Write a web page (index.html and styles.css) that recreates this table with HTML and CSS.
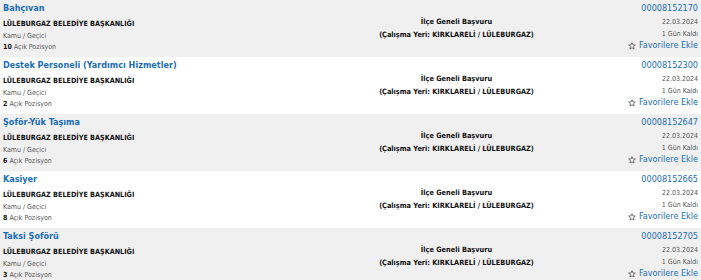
FILE: index.html
```html
<!DOCTYPE html>
<html lang="tr">
<head>
<meta charset="utf-8">
<link rel="stylesheet" href="styles.css">
</head>
<body>
<div class="list">
  <div class="row">
    <div class="left">
      <a class="title" href="#">Bahçıvan</a>
      <div class="org">LÜLEBURGAZ BELEDİYE BAŞKANLIĞI</div>
      <div class="type">Kamu / Geçici</div>
      <div class="count"><b>10</b> Açık Pozisyon</div>
    </div>
    <div class="mid">
      <div>İlçe Geneli Başvuru</div>
      <div>(Çalışma Yeri: KIRKLARELİ / LÜLEBURGAZ)</div>
    </div>
    <div class="right">
      <a class="num" href="#">00008152170</a>
      <div class="date">22.03.2024</div>
      <div class="left-days">1 Gün Kaldı</div>
      <a class="fav" href="#"><svg class="star" viewBox="0 0 10 10"><path d="M5 0.8 L6.2 3.6 L9.2 3.8 L6.9 5.8 L7.6 8.8 L5 7.2 L2.4 8.8 L3.1 5.8 L0.8 3.8 L3.8 3.6 Z"/></svg>Favorilere Ekle</a>
    </div>
  </div>
  <div class="row">
    <div class="left">
      <a class="title" href="#">Destek Personeli (Yardımcı Hizmetler)</a>
      <div class="org">LÜLEBURGAZ BELEDİYE BAŞKANLIĞI</div>
      <div class="type">Kamu / Geçici</div>
      <div class="count"><b>2</b> Açık Pozisyon</div>
    </div>
    <div class="mid">
      <div>İlçe Geneli Başvuru</div>
      <div>(Çalışma Yeri: KIRKLARELİ / LÜLEBURGAZ)</div>
    </div>
    <div class="right">
      <a class="num" href="#">00008152300</a>
      <div class="date">22.03.2024</div>
      <div class="left-days">1 Gün Kaldı</div>
      <a class="fav" href="#"><svg class="star" viewBox="0 0 10 10"><path d="M5 0.8 L6.2 3.6 L9.2 3.8 L6.9 5.8 L7.6 8.8 L5 7.2 L2.4 8.8 L3.1 5.8 L0.8 3.8 L3.8 3.6 Z"/></svg>Favorilere Ekle</a>
    </div>
  </div>
  <div class="row">
    <div class="left">
      <a class="title" href="#">Şoför-Yük Taşıma</a>
      <div class="org">LÜLEBURGAZ BELEDİYE BAŞKANLIĞI</div>
      <div class="type">Kamu / Geçici</div>
      <div class="count"><b>6</b> Açık Pozisyon</div>
    </div>
    <div class="mid">
      <div>İlçe Geneli Başvuru</div>
      <div>(Çalışma Yeri: KIRKLARELİ / LÜLEBURGAZ)</div>
    </div>
    <div class="right">
      <a class="num" href="#">00008152647</a>
      <div class="date">22.03.2024</div>
      <div class="left-days">1 Gün Kaldı</div>
      <a class="fav" href="#"><svg class="star" viewBox="0 0 10 10"><path d="M5 0.8 L6.2 3.6 L9.2 3.8 L6.9 5.8 L7.6 8.8 L5 7.2 L2.4 8.8 L3.1 5.8 L0.8 3.8 L3.8 3.6 Z"/></svg>Favorilere Ekle</a>
    </div>
  </div>
  <div class="row">
    <div class="left">
      <a class="title" href="#">Kasiyer</a>
      <div class="org">LÜLEBURGAZ BELEDİYE BAŞKANLIĞI</div>
      <div class="type">Kamu / Geçici</div>
      <div class="count"><b>8</b> Açık Pozisyon</div>
    </div>
    <div class="mid">
      <div>İlçe Geneli Başvuru</div>
      <div>(Çalışma Yeri: KIRKLARELİ / LÜLEBURGAZ)</div>
    </div>
    <div class="right">
      <a class="num" href="#">00008152665</a>
      <div class="date">22.03.2024</div>
      <div class="left-days">1 Gün Kaldı</div>
      <a class="fav" href="#"><svg class="star" viewBox="0 0 10 10"><path d="M5 0.8 L6.2 3.6 L9.2 3.8 L6.9 5.8 L7.6 8.8 L5 7.2 L2.4 8.8 L3.1 5.8 L0.8 3.8 L3.8 3.6 Z"/></svg>Favorilere Ekle</a>
    </div>
  </div>
  <div class="row">
    <div class="left">
      <a class="title" href="#">Taksi Şoförü</a>
      <div class="org">LÜLEBURGAZ BELEDİYE BAŞKANLIĞI</div>
      <div class="type">Kamu / Geçici</div>
      <div class="count"><b>3</b> Açık Pozisyon</div>
    </div>
    <div class="mid">
      <div>İlçe Geneli Başvuru</div>
      <div>(Çalışma Yeri: KIRKLARELİ / LÜLEBURGAZ)</div>
    </div>
    <div class="right">
      <a class="num" href="#">00008152705</a>
      <div class="date">22.03.2024</div>
      <div class="left-days">1 Gün Kaldı</div>
      <a class="fav" href="#"><svg class="star" viewBox="0 0 10 10"><path d="M5 0.8 L6.2 3.6 L9.2 3.8 L6.9 5.8 L7.6 8.8 L5 7.2 L2.4 8.8 L3.1 5.8 L0.8 3.8 L3.8 3.6 Z"/></svg>Favorilere Ekle</a>
    </div>
  </div>
</div>
</body>
</html>
```
FILE: styles.css
```css
html, body {
  margin: 0;
  padding: 0;
  background: #ffffff;
}
body {
  font-family: "DejaVu Sans Condensed", "DejaVu Sans", sans-serif;
  font-stretch: condensed;
  color: #222;
}
a {
  text-decoration: none;
}
.list {
  display: flex;
  flex-direction: column;
}
.row {
  display: grid;
  grid-template-columns: 1fr 212px 140px;
  height: 57px;
  padding: 0 3px;
  box-sizing: border-box;
}
.row:nth-child(odd) {
  background: #f0f0f0;
}
.left {
  display: flex;
  flex-direction: column;
  align-items: flex-start;
  padding-top: 1px;
}
.title {
  font-size: 9px;
  font-weight: bold;
  color: #1b6db5;
  line-height: 15px;
}
.org {
  font-size: 7.2px;
  font-weight: bold;
  color: #111;
  line-height: 13px;
  margin-top: 1px;
}
.type {
  font-size: 7px;
  color: #555;
  line-height: 11px;
  margin-top: 1px;
}
.count {
  font-size: 7px;
  color: #555;
  line-height: 11px;
}
.count b {
  color: #111;
}
.mid {
  display: flex;
  flex-direction: column;
  align-items: center;
  justify-content: center;
  font-size: 7.3px;
  font-weight: bold;
  color: #111;
  line-height: 13px;
  padding-bottom: 2px;
  padding-left: 9px;
}
.right {
  display: flex;
  flex-direction: column;
  align-items: flex-end;
  padding-top: 1px;
}
.num {
  font-size: 9px;
  color: #1b6db5;
  line-height: 15px;
}
.date, .left-days {
  font-size: 7px;
  color: #555;
  line-height: 12px;
}
.fav {
  font-size: 9px;
  color: #1b6db5;
  line-height: 11px;
  display: flex;
  align-items: center;
  gap: 3px;
}
.star {
  width: 8px;
  height: 8px;
  fill: none;
  stroke: #444;
  stroke-width: 0.9;
}
```
